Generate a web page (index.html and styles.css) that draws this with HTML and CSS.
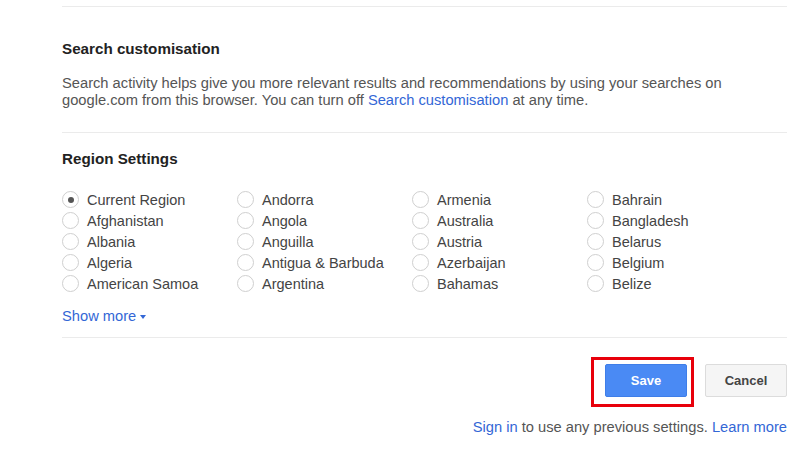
FILE: index.html
```html
<!DOCTYPE html>
<html>
<head>
<meta charset="utf-8">
<link rel="stylesheet" href="styles.css">
</head>
<body>
<div class="page">
  <div class="top-rule"></div>
  <section class="section customisation">
    <h2 class="heading">Search customisation</h2>
    <p class="desc">Search activity helps give you more relevant results and recommendations by using your searches on google.com from this browser. You can turn off <a class="link" href="#">Search customisation</a> at any time.</p>
  </section>
  <section class="section region">
    <h2 class="heading">Region Settings</h2>
    <div class="regions">
      <label class="opt"><span class="radio checked"></span>Current Region</label>
      <label class="opt"><span class="radio"></span>Andorra</label>
      <label class="opt"><span class="radio"></span>Armenia</label>
      <label class="opt"><span class="radio"></span>Bahrain</label>
      <label class="opt"><span class="radio"></span>Afghanistan</label>
      <label class="opt"><span class="radio"></span>Angola</label>
      <label class="opt"><span class="radio"></span>Australia</label>
      <label class="opt"><span class="radio"></span>Bangladesh</label>
      <label class="opt"><span class="radio"></span>Albania</label>
      <label class="opt"><span class="radio"></span>Anguilla</label>
      <label class="opt"><span class="radio"></span>Austria</label>
      <label class="opt"><span class="radio"></span>Belarus</label>
      <label class="opt"><span class="radio"></span>Algeria</label>
      <label class="opt"><span class="radio"></span>Antigua &amp; Barbuda</label>
      <label class="opt"><span class="radio"></span>Azerbaijan</label>
      <label class="opt"><span class="radio"></span>Belgium</label>
      <label class="opt"><span class="radio"></span>American Samoa</label>
      <label class="opt"><span class="radio"></span>Argentina</label>
      <label class="opt"><span class="radio"></span>Bahamas</label>
      <label class="opt"><span class="radio"></span>Belize</label>
    </div>
    <a class="link show-more" href="#">Show more <span class="caret"></span></a>
  </section>
  <div class="actions">
    <div class="highlight"><button class="btn save">Save</button></div>
    <button class="btn cancel">Cancel</button>
  </div>
  <p class="footer"><a class="link" href="#">Sign in</a> to use any previous settings. <a class="link" href="#">Learn more</a></p>
</div>
</body>
</html>
```

FILE: styles.css
```css
html, body {
  margin: 0;
  padding: 0;
  background: #fff;
}
body {
  font-family: "Liberation Sans", Arial, sans-serif;
  color: #444;
}
.page {
  width: 725px;
  margin-left: 62px;
  padding-top: 6px;
}
.top-rule {
  border-top: 1px solid #ebebeb;
}
.section {
  border-bottom: 1px solid #ebebeb;
}
.heading {
  margin: 0;
  font-size: 15.2px;
  font-weight: bold;
  color: #222;
  line-height: 18px;
}
.customisation {
  padding-top: 33px;
  height: 92px;
}
.desc {
  margin: 17px 0 0;
  font-size: 14.7px;
  line-height: 17px;
  color: #555;
}
.link {
  color: #3367d6;
  text-decoration: none;
}
.region {
  padding-top: 17px;
  height: 187px;
}
.regions {
  display: grid;
  grid-template-columns: repeat(4, 175px);
  grid-auto-rows: 21px;
  margin-top: 21px;
}
.opt {
  display: flex;
  align-items: center;
  font-size: 14.5px;
  color: #444;
  white-space: nowrap;
}
.radio {
  width: 15px;
  height: 15px;
  border: 1px solid #cfcfcf;
  border-radius: 50%;
  margin-right: 8px;
  box-sizing: content-box;
  display: flex;
  align-items: center;
  justify-content: center;
  flex: none;
}
.radio.checked::after {
  content: "";
  width: 6px;
  height: 6px;
  border-radius: 50%;
  background: #555;
}
.show-more {
  display: inline-flex;
  align-items: center;
  margin-top: 14px;
  font-size: 14.7px;
}
.caret {
  width: 0;
  height: 0;
  border-left: 3.5px solid transparent;
  border-right: 3.5px solid transparent;
  border-top: 4px solid #3367d6;
  margin-left: 4px;
  margin-top: 1px;
}
.actions {
  display: flex;
  justify-content: flex-end;
  align-items: flex-start;
  padding-top: 19px;
}
.highlight {
  border: 3px solid #e8000b;
  padding: 4px 4px 7px 11px;
  margin-right: 11px;
}
.btn {
  height: 33px;
  width: 82px;
  border-radius: 2px;
  font-family: "Liberation Sans", Arial, sans-serif;
  font-size: 13px;
  font-weight: bold;
  display: block;
  padding: 0;
}
.save {
  background: #4a8af4;
  border: 1px solid #3f7ee8;
  color: #fff;
}
.cancel {
  margin-top: 7px;
  background: #f5f5f5;
  border: 1px solid #dcdcdc;
  color: #444;
}
.footer {
  margin: 12px 0 0;
  text-align: right;
  font-size: 14.7px;
  line-height: 17px;
  color: #555;
}
```
